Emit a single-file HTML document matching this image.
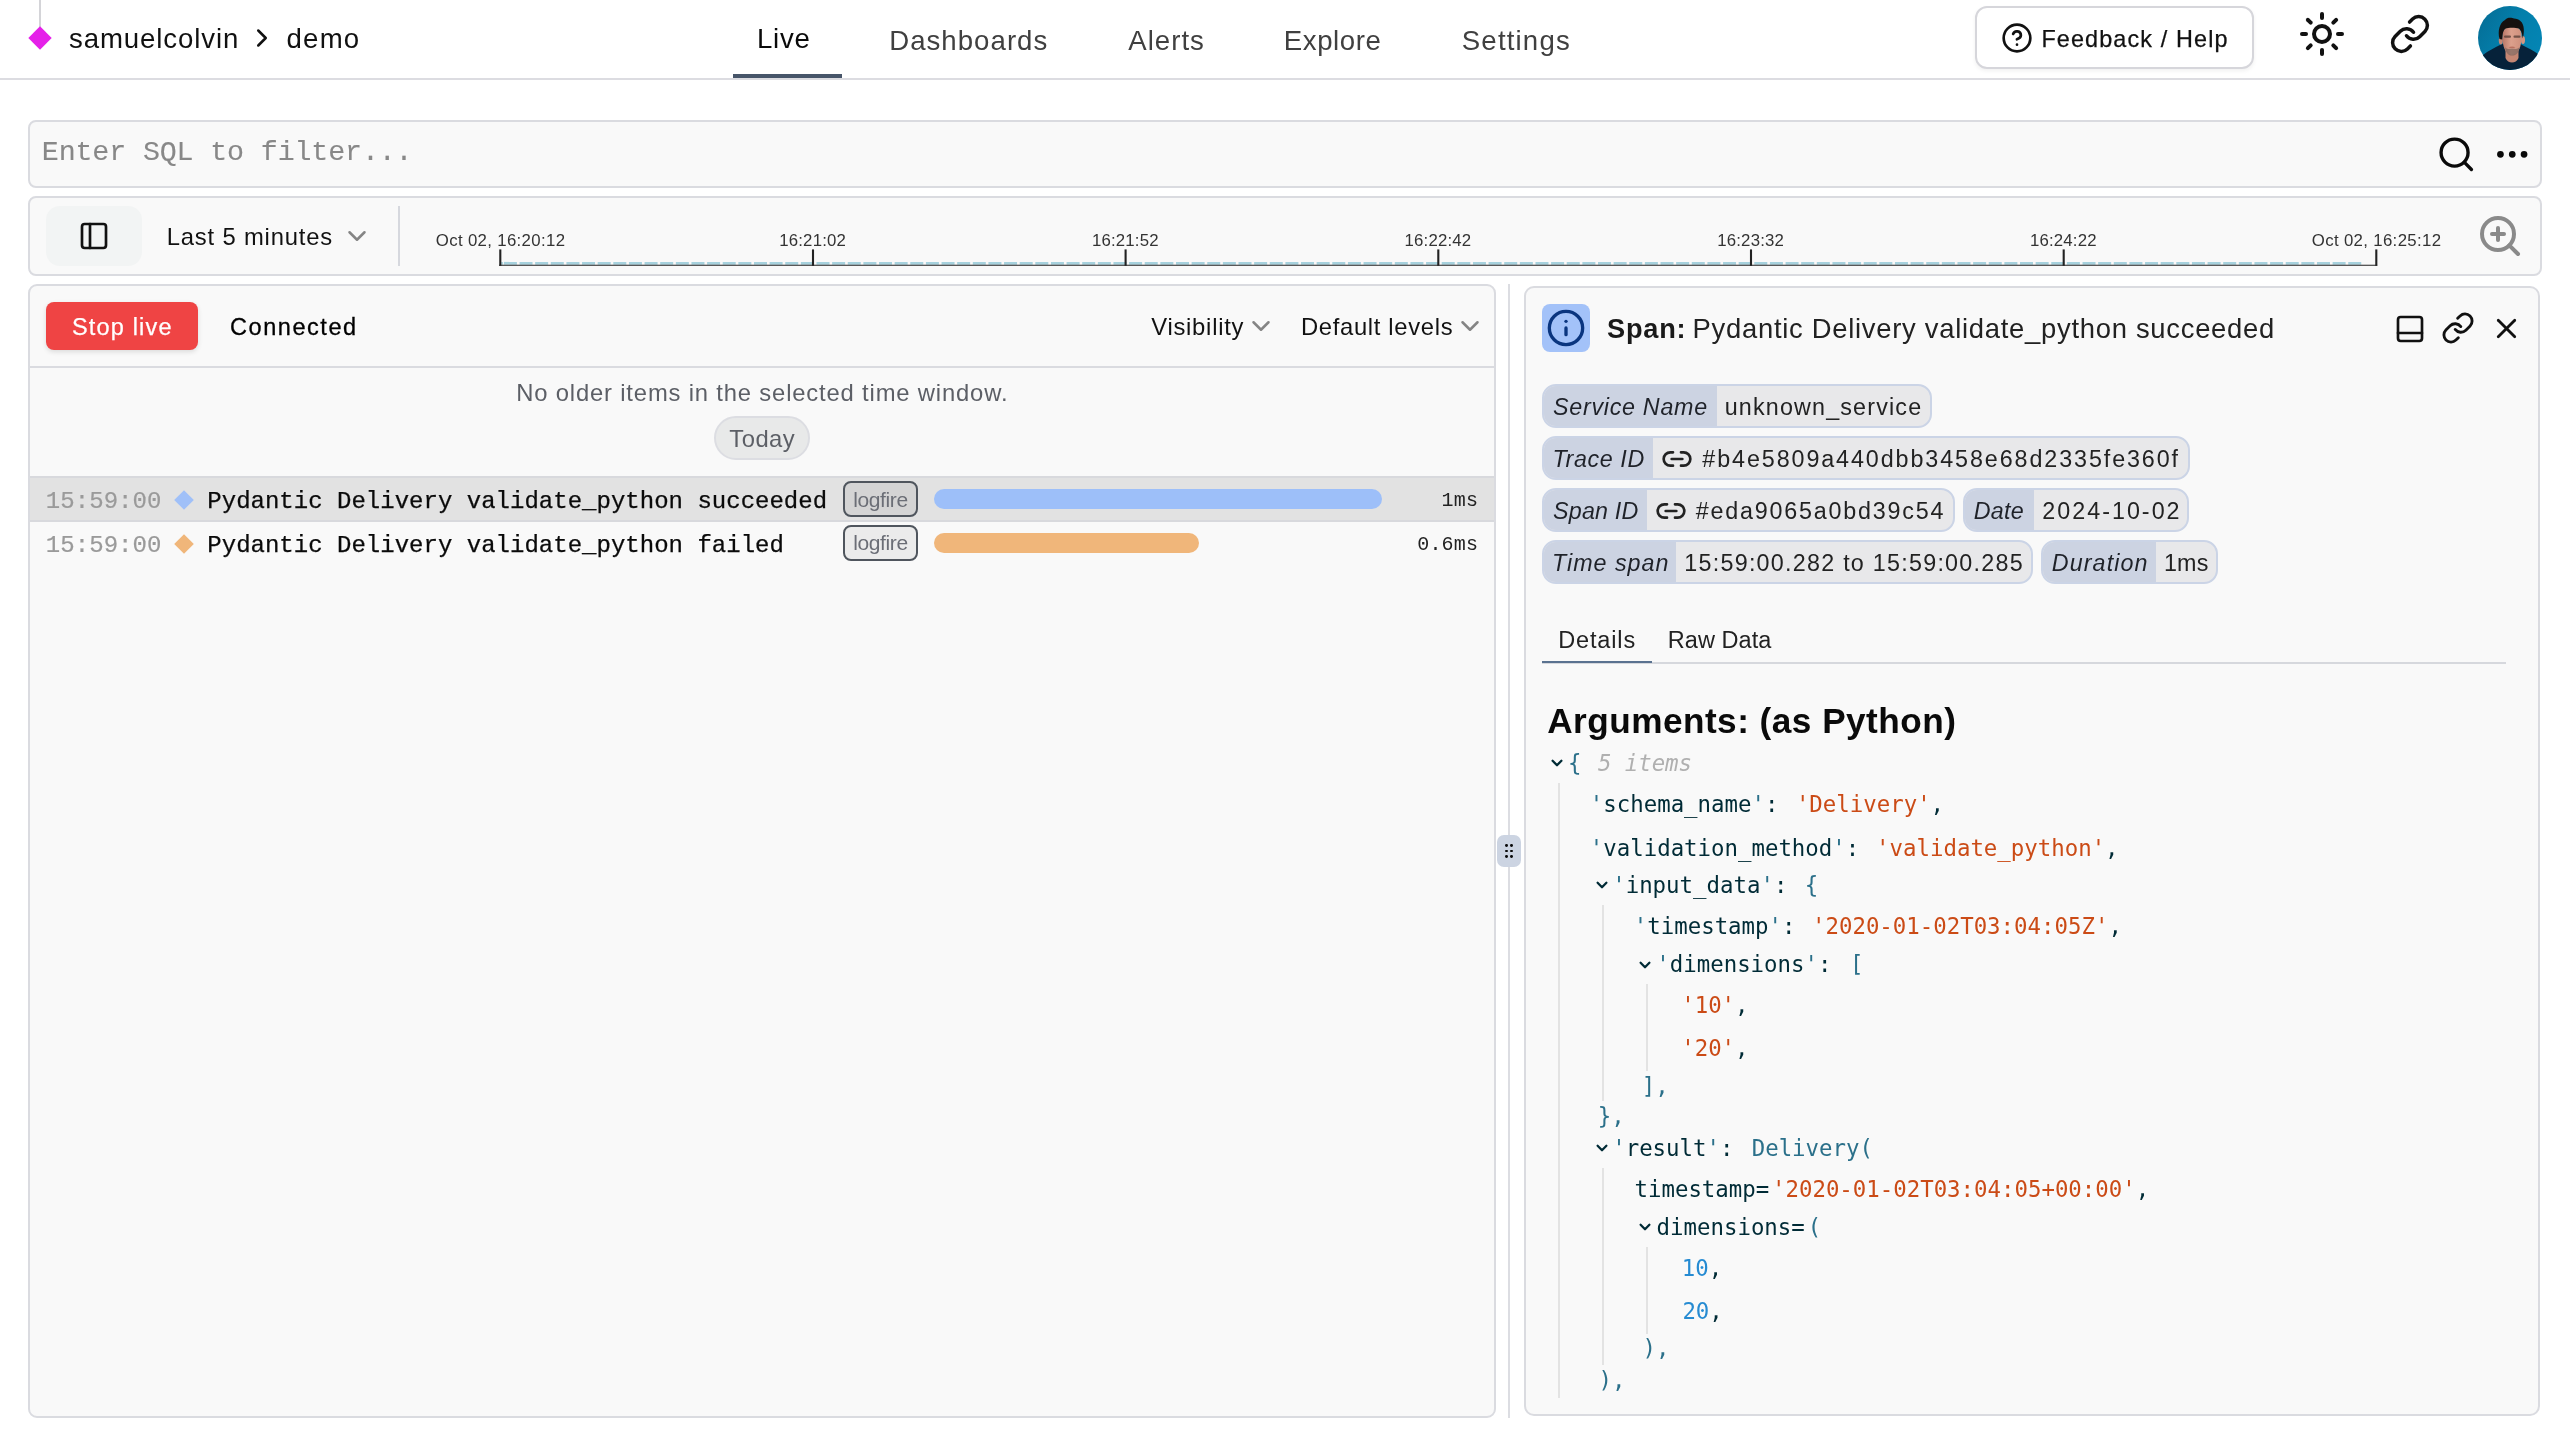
<!DOCTYPE html>
<html lang="en"><head><meta charset="utf-8"><title>Logfire - Live</title>
<style>
html,body{margin:0;padding:0;background:#fff;}
body{width:2570px;height:1444px;position:relative;overflow:hidden;font-family:"Liberation Sans", sans-serif;}
#root{position:absolute;left:0;top:0;width:2570px;height:1444px;will-change:transform;}
.a{position:absolute;box-sizing:border-box;}
.t{white-space:pre;}
.chip{border:2px solid #cbd4e6;border-radius:14px;background:#e8e8ea;overflow:hidden;}
.chip>div{height:100%;background:#ccd3e2;}
</style></head><body><div id="root">
<div class="a" style="left:39px;top:0px;width:2px;height:27px;background:#d4d4d8;"></div>
<svg class="a" style="left:26px;top:24px" width="28" height="28" viewBox="0 0 28 28"><polygon points="14,2.3 25.7,14 14,25.7 2.3,14" fill="#e520e9"/></svg>
<div class="a t" style='left:69.00px;top:25.01px;font:normal 400 27.6px/1 "Liberation Sans", sans-serif;letter-spacing:0.886px;color:#111;'>samuelcolvin</div>
<svg class="a" style="left:247px;top:23px;" width="30" height="30" viewBox="0 0 24 24" fill="none" stroke="#111" stroke-width="2" stroke-linecap="round" stroke-linejoin="round"><path d="m9 18 6-6-6-6"/></svg>
<div class="a t" style='left:286.60px;top:25.01px;font:normal 400 27.6px/1 "Liberation Sans", sans-serif;letter-spacing:1.174px;color:#111;'>demo</div>
<div class="a t" style='left:756.90px;top:25.01px;font:normal 400 27.6px/1 "Liberation Sans", sans-serif;letter-spacing:0.775px;color:#0a0a0a;'>Live</div>
<div class="a t" style='left:889.20px;top:27.01px;font:normal 400 27.6px/1 "Liberation Sans", sans-serif;letter-spacing:1.034px;color:#404040;'>Dashboards</div>
<div class="a t" style='left:1128.20px;top:27.01px;font:normal 400 27.6px/1 "Liberation Sans", sans-serif;letter-spacing:1.033px;color:#404040;'>Alerts</div>
<div class="a t" style='left:1283.80px;top:27.01px;font:normal 400 27.6px/1 "Liberation Sans", sans-serif;letter-spacing:0.581px;color:#404040;'>Explore</div>
<div class="a t" style='left:1461.80px;top:27.01px;font:normal 400 27.6px/1 "Liberation Sans", sans-serif;letter-spacing:1.170px;color:#404040;'>Settings</div>
<div class="a" style="left:733px;top:74px;width:109px;height:4px;background:#475569;"></div>
<div class="a" style="left:0px;top:78px;width:2570px;height:2px;background:#dcdce1;"></div>
<div class="a" style="left:1975px;top:6px;width:279px;height:63px;background:#fff;border:2px solid #d6d6db;border-radius:12px;box-shadow:0 2px 4px rgba(0,0,0,.06);"></div>
<svg class="a" style="left:2000.7px;top:21.5px;" width="32" height="32" viewBox="0 0 24 24" fill="none" stroke="#111" stroke-width="2" stroke-linecap="round" stroke-linejoin="round"><circle cx="12" cy="12" r="10"/><path d="M9.09 9a3 3 0 0 1 5.83 1c0 2-3 3-3 3"/><path d="M12 17h.01"/></svg>
<div class="a t" style='left:2041.40px;top:28.00px;font:normal 400 23.4px/1 "Liberation Sans", sans-serif;letter-spacing:1.127px;-webkit-text-stroke:0.25px #111;color:#111;'>Feedback / Help</div>
<svg class="a" style="left:2298px;top:9.9px;" width="48" height="48" viewBox="0 0 24 24" fill="none" stroke="#111" stroke-width="2" stroke-linecap="round" stroke-linejoin="round"><circle cx="12" cy="12" r="4"/><path d="M12 2v2"/><path d="M12 20v2"/><path d="m4.93 4.93 1.41 1.41"/><path d="m17.66 17.66 1.41 1.41"/><path d="M2 12h2"/><path d="M20 12h2"/><path d="m6.34 17.66-1.41 1.41"/><path d="m19.07 4.93-1.41 1.41"/></svg>
<svg class="a" style="left:2388.8px;top:12.9px;" width="42" height="42" viewBox="0 0 24 24" fill="none" stroke="#111" stroke-width="2" stroke-linecap="round" stroke-linejoin="round"><path d="M10 13a5 5 0 0 0 7.54.54l3-3a5 5 0 0 0-7.07-7.07l-1.72 1.71"/><path d="M14 11a5 5 0 0 0-7.54-.54l-3 3a5 5 0 0 0 7.07 7.07l1.71-1.71"/></svg>
<svg class="a" style="left:2478px;top:6px" width="64" height="64" viewBox="0 0 64 64">
<defs><clipPath id="av"><circle cx="32" cy="32" r="32"/></clipPath>
<linearGradient id="avg" x1="0" y1="0" x2="1" y2="0.6"><stop offset="0" stop-color="#056b93"/><stop offset="0.55" stop-color="#047fab"/><stop offset="1" stop-color="#0485b4"/></linearGradient>
<linearGradient id="skin" x1="0" y1="0" x2="1" y2="0"><stop offset="0" stop-color="#b87767"/><stop offset="0.45" stop-color="#dca08c"/><stop offset="1" stop-color="#cf907d"/></linearGradient></defs>
<g clip-path="url(#av)"><rect width="64" height="64" fill="url(#avg)"/>
<path d="M5 49 C10 45 17 41.5 22 39 L27 36.5 L41 37 L45 39.5 C50 42 56 45 60 48 L62 66 L2 66 Z" fill="#06223a"/>
<path d="M27.5 44 L27.5 52 C30 58 38 58 40.5 52 L40.5 44 Z" fill="#c48673"/>
<ellipse cx="22.8" cy="34.5" rx="2" ry="4" fill="#c58775"/><ellipse cx="45" cy="34" rx="2" ry="4" fill="#d39682"/>
<path d="M24.3 30 C24.3 23 28 20.5 34 20.5 C40 20.5 43.6 23 43.6 30 C43.6 38 41.8 43.5 39 47 C36.5 49.6 31.5 49.6 29 47 C26.2 43.5 24.3 38 24.3 30 Z" fill="url(#skin)"/>
<path d="M27 41 C29 44 31 42.5 34 42.5 C37 42.5 39 44 41.5 41 C41 46 38.5 49.6 34 49.6 C30 49.6 27.5 46 27 41 Z" fill="#6a5a55" opacity=".6"/>
<path d="M30.5 41.2 C32.5 40.2 35.5 40.2 37.5 41.2 C35.5 42.4 32.5 42.4 30.5 41.2Z" fill="#b9705f"/>
<rect x="26" y="29.6" width="7" height="2.2" rx="1" fill="#5a4038" opacity=".8"/><rect x="35.5" y="29.6" width="7" height="2.2" rx="1" fill="#5a4038" opacity=".8"/>
<path d="M21.5 33 C19.5 25 21.5 17 27 14 C29 11 34 11.5 36 12.5 C41 12.5 45.5 16 45.8 23 C46 27 45.5 30 44.6 32.5 C44.4 27 43 24.5 41 22.5 C37 21.5 30 21.5 27.2 22.8 C25 25 24.5 28 24.2 33.5 Z" fill="#15110f"/>
</g></svg>
<div class="a" style="left:28px;top:120px;width:2514px;height:68px;background:#f9f9f9;border:2px solid #dadbe0;border-radius:8px;"></div>
<div class="a t" style='left:41.80px;top:138.30px;font:normal 400 28.3px/1 "Liberation Mono", "DejaVu Sans Mono", monospace;letter-spacing:-0.133px;-webkit-text-stroke:0.12px #888;color:#888;'>Enter SQL to filter...</div>
<svg class="a" style="left:2435.7px;top:133.6px;" width="40.5" height="40.5" viewBox="0 0 24 24" fill="none" stroke="#0a0a0a" stroke-width="2" stroke-linecap="round" stroke-linejoin="round"><circle cx="11" cy="11" r="8"/><path d="m21 21-4.3-4.3"/></svg>
<svg class="a" style="left:2491.5px;top:133.6px;" width="40.5" height="40.5" viewBox="0 0 24 24" fill="none" stroke="#0a0a0a" stroke-width="2" stroke-linecap="round" stroke-linejoin="round"><circle cx="12" cy="12" r="1"/><circle cx="19" cy="12" r="1"/><circle cx="5" cy="12" r="1"/></svg>
<div class="a" style="left:28px;top:196px;width:2514px;height:80px;background:#f9f9f9;border:2px solid #dadbe0;border-radius:8px;"></div>
<div class="a" style="left:46px;top:206px;width:96px;height:60px;background:#f2f4f4;border-radius:14px;"></div>
<svg class="a" style="left:78px;top:220px;" width="32" height="32" viewBox="0 0 24 24" fill="none" stroke="#111" stroke-width="2" stroke-linecap="round" stroke-linejoin="round"><rect width="18" height="18" x="3" y="3" rx="2"/><path d="M9 3v18"/></svg>
<div class="a t" style='left:166.70px;top:225.01px;font:normal 400 23.8px/1 "Liberation Sans", sans-serif;letter-spacing:0.826px;color:#111;'>Last 5 minutes</div>
<svg class="a" style="left:342.2px;top:221.2px;" width="30" height="30" viewBox="0 0 24 24" fill="none" stroke="#858585" stroke-width="2" stroke-linecap="round" stroke-linejoin="round"><path d="m6 9 6 6 6-6"/></svg>
<div class="a" style="left:398px;top:206px;width:2px;height:60px;background:#d6d8de;"></div>
<svg class="a" style="left:0;top:240px" width="2570" height="34"><line x1="501.3" y1="23.3" x2="502.9" y2="23.3" stroke="#a6d1dd" stroke-width="2.8"/><line x1="503.9" y1="23.3" x2="2361.5" y2="23.3" stroke="#a6d1dd" stroke-width="2.8" stroke-dasharray="13 2.63"/><line x1="499.1" y1="25.25" x2="2377.2" y2="25.25" stroke="#222" stroke-width="1.2"/><line x1="500.3" y1="9.4" x2="500.3" y2="25.8" stroke="#222" stroke-width="2.1"/><line x1="813.0" y1="9.4" x2="813.0" y2="25.8" stroke="#222" stroke-width="2.1"/><line x1="1125.6" y1="9.4" x2="1125.6" y2="25.8" stroke="#222" stroke-width="2.1"/><line x1="1438.3" y1="9.4" x2="1438.3" y2="25.8" stroke="#222" stroke-width="2.1"/><line x1="1751.0" y1="9.4" x2="1751.0" y2="25.8" stroke="#222" stroke-width="2.1"/><line x1="2063.7" y1="9.4" x2="2063.7" y2="25.8" stroke="#222" stroke-width="2.1"/><line x1="2376.3" y1="9.4" x2="2376.3" y2="25.8" stroke="#222" stroke-width="2.1"/></svg>
<div class="a t" style='left:435.75px;top:233.01px;font:normal 400 16.8px/1 "Liberation Sans", sans-serif;letter-spacing:0.343px;color:#333;'>Oct 02, 16:20:12</div>
<div class="a t" style='left:779.22px;top:233.01px;font:normal 400 16.8px/1 "Liberation Sans", sans-serif;letter-spacing:0.187px;color:#333;'>16:21:02</div>
<div class="a t" style='left:1091.89px;top:233.01px;font:normal 400 16.8px/1 "Liberation Sans", sans-serif;letter-spacing:0.187px;color:#333;'>16:21:52</div>
<div class="a t" style='left:1404.56px;top:233.01px;font:normal 400 16.8px/1 "Liberation Sans", sans-serif;letter-spacing:0.187px;color:#333;'>16:22:42</div>
<div class="a t" style='left:1717.23px;top:233.01px;font:normal 400 16.8px/1 "Liberation Sans", sans-serif;letter-spacing:0.187px;color:#333;'>16:23:32</div>
<div class="a t" style='left:2029.90px;top:233.01px;font:normal 400 16.8px/1 "Liberation Sans", sans-serif;letter-spacing:0.187px;color:#333;'>16:24:22</div>
<div class="a t" style='left:2311.77px;top:233.01px;font:normal 400 16.8px/1 "Liberation Sans", sans-serif;letter-spacing:0.343px;color:#333;'>Oct 02, 16:25:12</div>
<svg class="a" style="left:2476px;top:212px;" width="48" height="48" viewBox="0 0 24 24" fill="none" stroke="#8a8a8a" stroke-width="2" stroke-linecap="round" stroke-linejoin="round"><circle cx="11" cy="11" r="8"/><path d="M21 21l-4.35-4.35"/><path d="M11 8v6"/><path d="M8 11h6"/></svg>
<div class="a" style="left:28px;top:284px;width:1468px;height:1134px;background:#f9f9f9;border:2px solid #dadbe0;border-radius:9px;"></div>
<div class="a" style="left:46px;top:302px;width:152px;height:48px;background:#ef4444;border-radius:8px;box-shadow:0 2px 5px rgba(0,0,0,.12);"></div>
<div class="a t" style='left:71.90px;top:316.00px;font:normal 400 23.5px/1 "Liberation Sans", sans-serif;letter-spacing:1.180px;-webkit-text-stroke:0.25px #fff;color:#fff;'>Stop live</div>
<div class="a t" style='left:230.00px;top:316.00px;font:normal 400 23.5px/1 "Liberation Sans", sans-serif;letter-spacing:1.550px;-webkit-text-stroke:0.3px #000;color:#000;'>Connected</div>
<div class="a t" style='left:1151.20px;top:315.01px;font:normal 400 23.8px/1 "Liberation Sans", sans-serif;letter-spacing:0.753px;color:#111;'>Visibility</div>
<svg class="a" style="left:1246.3px;top:311.4px;" width="30" height="30" viewBox="0 0 24 24" fill="none" stroke="#858585" stroke-width="2" stroke-linecap="round" stroke-linejoin="round"><path d="m6 9 6 6 6-6"/></svg>
<div class="a t" style='left:1300.90px;top:315.01px;font:normal 400 23.8px/1 "Liberation Sans", sans-serif;letter-spacing:0.681px;color:#111;'>Default levels</div>
<svg class="a" style="left:1455px;top:311.4px;" width="30" height="30" viewBox="0 0 24 24" fill="none" stroke="#858585" stroke-width="2" stroke-linecap="round" stroke-linejoin="round"><path d="m6 9 6 6 6-6"/></svg>
<div class="a" style="left:30px;top:366px;width:1464px;height:2px;background:#dadbe0;"></div>
<div class="a t" style='left:516.20px;top:381.01px;font:normal 400 23.8px/1 "Liberation Sans", sans-serif;letter-spacing:0.833px;color:#5c5f66;'>No older items in the selected time window.</div>
<div class="a" style="left:714px;top:416px;width:96px;height:44px;background:#e8e9e9;border:2px solid #dcdde2;border-radius:22px;"></div>
<div class="a t" style='left:729.30px;top:427.01px;font:normal 400 23.8px/1 "Liberation Sans", sans-serif;letter-spacing:0.474px;color:#5c5f66;'>Today</div>
<div class="a" style="left:30px;top:476px;width:1464px;height:46px;background:#e2e2e2;border-top:2px solid #d8d9dd;border-bottom:2px solid #d8d9dd;box-sizing:border-box;"></div>
<div class="a t" style='left:45.80px;top:489.62px;font:normal 400 24px/1 "Liberation Mono", "DejaVu Sans Mono", monospace;letter-spacing:0.055px;-webkit-text-stroke:0.2px #9a9a9a;color:#9a9a9a;'>15:59:00</div>
<svg class="a" style="left:173.2px;top:488.7px" width="22" height="22" viewBox="0 0 22 22"><polygon points="11,1.2 20.8,11 11,20.8 1.2,11" fill="#a0c0f8"/></svg>
<div class="a t" style='left:207.30px;top:489.62px;font:normal 400 24px/1 "Liberation Mono", "DejaVu Sans Mono", monospace;letter-spacing:0.012px;-webkit-text-stroke:0.25px #0a0a0a;color:#0a0a0a;'>Pydantic Delivery validate_python succeeded</div>
<div class="a" style="left:843px;top:481.2px;width:75px;height:36px;background:#d4d4d4;border:2px solid #4f555d;border-radius:8px;"></div>
<div class="a t" style='left:853.30px;top:488.50px;font:normal 400 21px/1 "Liberation Sans", sans-serif;letter-spacing:-0.403px;color:#6b6e76;'>logfire</div>
<div class="a" style="left:934px;top:489px;width:448px;height:20px;background:#9dbff9;border-radius:10px;"></div>
<div class="a t" style='left:1441.60px;top:490.60px;font:normal 400 20px/1 "Liberation Mono", "DejaVu Sans Mono", monospace;letter-spacing:0.198px;color:#222;'>1ms</div>
<div class="a t" style='left:45.80px;top:533.51px;font:normal 400 24px/1 "Liberation Mono", "DejaVu Sans Mono", monospace;letter-spacing:0.055px;-webkit-text-stroke:0.2px #9a9a9a;color:#9a9a9a;'>15:59:00</div>
<svg class="a" style="left:173.2px;top:532.6px" width="22" height="22" viewBox="0 0 22 22"><polygon points="11,1.2 20.8,11 11,20.8 1.2,11" fill="#f0b67a"/></svg>
<div class="a t" style='left:207.30px;top:533.51px;font:normal 400 24px/1 "Liberation Mono", "DejaVu Sans Mono", monospace;letter-spacing:0.013px;-webkit-text-stroke:0.25px #0a0a0a;color:#0a0a0a;'>Pydantic Delivery validate_python failed</div>
<div class="a" style="left:843px;top:525.1px;width:75px;height:36px;background:#ebebeb;border:2px solid #4f555d;border-radius:8px;"></div>
<div class="a t" style='left:853.30px;top:532.41px;font:normal 400 21px/1 "Liberation Sans", sans-serif;letter-spacing:-0.403px;color:#6b6e76;'>logfire</div>
<div class="a" style="left:934px;top:533px;width:265px;height:20px;background:#f0b67a;border-radius:10px;"></div>
<div class="a t" style='left:1417.20px;top:534.51px;font:normal 400 20px/1 "Liberation Mono", "DejaVu Sans Mono", monospace;letter-spacing:0.198px;color:#222;'>0.6ms</div>
<div class="a" style="left:1508px;top:284px;width:2px;height:1134px;background:#dcdde2;"></div>
<div class="a" style="left:1497px;top:835px;width:24px;height:32px;background:#ccd4e2;border-radius:7px;"></div>
<div class="a" style="left:1504.8999999999999px;top:844.1px;width:2.8px;height:2.8px;background:#0a0a0a;border-radius:1.4px;"></div>
<div class="a" style="left:1504.8999999999999px;top:849.6px;width:2.8px;height:2.8px;background:#0a0a0a;border-radius:1.4px;"></div>
<div class="a" style="left:1504.8999999999999px;top:854.9px;width:2.8px;height:2.8px;background:#0a0a0a;border-radius:1.4px;"></div>
<div class="a" style="left:1510.3px;top:844.1px;width:2.8px;height:2.8px;background:#0a0a0a;border-radius:1.4px;"></div>
<div class="a" style="left:1510.3px;top:849.6px;width:2.8px;height:2.8px;background:#0a0a0a;border-radius:1.4px;"></div>
<div class="a" style="left:1510.3px;top:854.9px;width:2.8px;height:2.8px;background:#0a0a0a;border-radius:1.4px;"></div>
<div class="a" style="left:1524px;top:286px;width:1016px;height:1130px;background:#f9f9f9;border:2px solid #dadbe0;border-radius:10px;"></div>
<div class="a" style="left:1542px;top:304px;width:48px;height:48px;background:#a3c2f9;border-radius:8px;"></div>
<svg class="a" style="left:1546px;top:308px;" width="40" height="40" viewBox="0 0 24 24" fill="none" stroke="#0a357f" stroke-width="2" stroke-linecap="round" stroke-linejoin="round"><circle cx="12" cy="12" r="10"/><path d="M12 16v-4"/><path d="M12 8h.01"/></svg>
<div class="a t" style='left:1607.00px;top:314.60px;font:normal 700 27.2px/1 "Liberation Sans", sans-serif;letter-spacing:0.758px;color:#1a1a1a;'>Span:</div>
<div class="a t" style='left:1692.60px;top:314.60px;font:normal 400 27.4px/1 "Liberation Sans", sans-serif;letter-spacing:0.725px;color:#222;'>Pydantic Delivery validate_python succeeded</div>
<svg class="a" style="left:2394px;top:312.5px;" width="32" height="32" viewBox="0 0 24 24" fill="none" stroke="#111" stroke-width="2" stroke-linecap="round" stroke-linejoin="round"><rect width="18" height="18" x="3" y="3" rx="2"/><path d="M3 15h18"/></svg>
<svg class="a" style="left:2441px;top:311px;" width="34" height="34" viewBox="0 0 24 24" fill="none" stroke="#111" stroke-width="2" stroke-linecap="round" stroke-linejoin="round"><path d="M10 13a5 5 0 0 0 7.54.54l3-3a5 5 0 0 0-7.07-7.07l-1.72 1.71"/><path d="M14 11a5 5 0 0 0-7.54-.54l-3 3a5 5 0 0 0 7.07 7.07l1.71-1.71"/></svg>
<svg class="a" style="left:2489.5px;top:311.5px;" width="33" height="33" viewBox="0 0 24 24" fill="none" stroke="#111" stroke-width="2" stroke-linecap="round" stroke-linejoin="round"><path d="M18 6 6 18"/><path d="m6 6 12 12"/></svg>
<div class="a chip" style="left:1542px;top:384px;width:390px;height:44px"><div style="width:173px"></div></div>
<div class="a t" style='left:1553.00px;top:395.60px;font:italic 400 23.3px/1 "Liberation Sans", sans-serif;letter-spacing:0.714px;color:#1f2229;'>Service Name</div>
<div class="a t" style='left:1724.70px;top:395.60px;font:normal 400 23.3px/1 "Liberation Sans", sans-serif;letter-spacing:1.175px;color:#222;'>unknown_service</div>
<div class="a chip" style="left:1542px;top:436px;width:648px;height:44px"><div style="width:109px"></div></div>
<div class="a t" style='left:1552.50px;top:447.60px;font:italic 400 23.3px/1 "Liberation Sans", sans-serif;letter-spacing:0.591px;color:#1f2229;'>Trace ID</div>
<div class="a t" style='left:1702.30px;top:447.60px;font:normal 400 23.3px/1 "Liberation Sans", sans-serif;letter-spacing:1.912px;color:#222;'>#b4e5809a440dbb3458e68d2335fe360f</div>
<svg class="a" style="left:1661px;top:442.5px;" width="32" height="32" viewBox="0 0 24 24" fill="none" stroke="#222" stroke-width="2" stroke-linecap="round" stroke-linejoin="round"><path d="M9 17H7A5 5 0 0 1 7 7h2"/><path d="M15 7h2a5 5 0 1 1 0 10h-2"/><path d="M8 12h8"/></svg>
<div class="a chip" style="left:1542px;top:488px;width:413px;height:44px"><div style="width:103px"></div></div>
<div class="a t" style='left:1553.00px;top:499.60px;font:italic 400 23.3px/1 "Liberation Sans", sans-serif;letter-spacing:0.191px;color:#1f2229;'>Span ID</div>
<div class="a t" style='left:1695.70px;top:499.60px;font:normal 400 23.3px/1 "Liberation Sans", sans-serif;letter-spacing:1.794px;color:#222;'>#eda9065a0bd39c54</div>
<svg class="a" style="left:1654.5px;top:494.5px;" width="32" height="32" viewBox="0 0 24 24" fill="none" stroke="#222" stroke-width="2" stroke-linecap="round" stroke-linejoin="round"><path d="M9 17H7A5 5 0 0 1 7 7h2"/><path d="M15 7h2a5 5 0 1 1 0 10h-2"/><path d="M8 12h8"/></svg>
<div class="a chip" style="left:1963px;top:488px;width:226px;height:44px"><div style="width:69px"></div></div>
<div class="a t" style='left:1973.80px;top:499.60px;font:italic 400 23.3px/1 "Liberation Sans", sans-serif;letter-spacing:0.249px;color:#1f2229;'>Date</div>
<div class="a t" style='left:2042.30px;top:499.60px;font:normal 400 23.3px/1 "Liberation Sans", sans-serif;letter-spacing:2.010px;color:#222;'>2024-10-02</div>
<div class="a chip" style="left:1542px;top:540px;width:491px;height:44px"><div style="width:131.7px"></div></div>
<div class="a t" style='left:1552.00px;top:551.60px;font:italic 400 23.3px/1 "Liberation Sans", sans-serif;letter-spacing:0.975px;color:#1f2229;'>Time span</div>
<div class="a t" style='left:1684.30px;top:551.60px;font:normal 400 23.3px/1 "Liberation Sans", sans-serif;letter-spacing:1.257px;color:#222;'>15:59:00.282 to 15:59:00.285</div>
<div class="a chip" style="left:2041px;top:540px;width:177px;height:44px"><div style="width:112.7px"></div></div>
<div class="a t" style='left:2051.70px;top:551.60px;font:italic 400 23.3px/1 "Liberation Sans", sans-serif;letter-spacing:1.114px;color:#1f2229;'>Duration</div>
<div class="a t" style='left:2163.90px;top:551.60px;font:normal 400 23.3px/1 "Liberation Sans", sans-serif;letter-spacing:0.268px;color:#222;'>1ms</div>
<div class="a t" style='left:1558.30px;top:628.71px;font:normal 400 23.5px/1 "Liberation Sans", sans-serif;letter-spacing:0.836px;color:#222;'>Details</div>
<div class="a t" style='left:1667.80px;top:628.71px;font:normal 400 23.5px/1 "Liberation Sans", sans-serif;letter-spacing:0.056px;color:#222;'>Raw Data</div>
<div class="a" style="left:1542px;top:662px;width:964px;height:2px;background:#d6d8dd;"></div>
<div class="a" style="left:1542px;top:661px;width:110px;height:2.4px;background:#5a7290;"></div>
<div class="a t" style='left:1547.20px;top:703.30px;font:normal 700 35.2px/1 "Liberation Sans", sans-serif;letter-spacing:0.472px;color:#0a0a0a;'>Arguments: (as Python)</div>
<div class="a" style="left:1558px;top:783px;width:2px;height:615px;background:#e3e3e3;"></div>
<div class="a" style="left:1601.6px;top:905px;width:2px;height:196px;background:#e3e3e3;"></div>
<div class="a" style="left:1601.6px;top:1168px;width:2px;height:196.5px;background:#e3e3e3;"></div>
<div class="a" style="left:1646.2px;top:984px;width:2px;height:86.5px;background:#e3e3e3;"></div>
<div class="a" style="left:1646.2px;top:1247px;width:2px;height:86.7px;background:#e3e3e3;"></div>
<svg class="a" style="left:1549.4px;top:757.4px" width="16" height="12" viewBox="-8 -6 16 12" fill="none" stroke="#002b36" stroke-width="2.3" stroke-linecap="round" stroke-linejoin="round"><path d="M-4.4 -2.2 L0 2.2 L4.4 -2.2"/></svg>
<div class="a t" style='left:1567.90px;top:751.70px;font:normal 400 22.38px/1 "DejaVu Sans Mono", "Liberation Mono", monospace;color:#2b708a;'>{</div>
<div class="a t" style='left:1598.10px;top:751.70px;font:italic 400 22.38px/1 "DejaVu Sans Mono", "Liberation Mono", monospace;letter-spacing:-0.088px;color:#b0b0b0;'>5 items</div>
<div class="a t" style='left:1589.80px;top:792.81px;font:normal 400 22.38px/1 "DejaVu Sans Mono", "Liberation Mono", monospace;'><span style="color:#2b708a">'</span><span style="color:#002b36">schema_name</span><span style="color:#2b708a">'</span><span style="color:#002b36">:</span></div>
<div class="a t" style='left:1795.90px;top:792.81px;font:normal 400 22.38px/1 "DejaVu Sans Mono", "Liberation Mono", monospace;'><span style="color:#cb4b16">'Delivery'</span><span style="color:#002b36">,</span></div>
<div class="a t" style='left:1589.80px;top:836.50px;font:normal 400 22.38px/1 "DejaVu Sans Mono", "Liberation Mono", monospace;'><span style="color:#2b708a">'</span><span style="color:#002b36">validation_method</span><span style="color:#2b708a">'</span><span style="color:#002b36">:</span></div>
<div class="a t" style='left:1876.10px;top:836.50px;font:normal 400 22.38px/1 "DejaVu Sans Mono", "Liberation Mono", monospace;'><span style="color:#cb4b16">'validate_python'</span><span style="color:#002b36">,</span></div>
<svg class="a" style="left:1593.5px;top:879.2px" width="16" height="12" viewBox="-8 -6 16 12" fill="none" stroke="#002b36" stroke-width="2.3" stroke-linecap="round" stroke-linejoin="round"><path d="M-4.4 -2.2 L0 2.2 L4.4 -2.2"/></svg>
<div class="a t" style='left:1612.20px;top:873.61px;font:normal 400 22.38px/1 "DejaVu Sans Mono", "Liberation Mono", monospace;'><span style="color:#2b708a">'</span><span style="color:#002b36">input_data</span><span style="color:#2b708a">'</span><span style="color:#002b36">:</span></div>
<div class="a t" style='left:1804.70px;top:873.61px;font:normal 400 22.38px/1 "DejaVu Sans Mono", "Liberation Mono", monospace;color:#2b708a;'>{</div>
<div class="a t" style='left:1633.80px;top:914.61px;font:normal 400 22.38px/1 "DejaVu Sans Mono", "Liberation Mono", monospace;'><span style="color:#2b708a">'</span><span style="color:#002b36">timestamp</span><span style="color:#2b708a">'</span><span style="color:#002b36">:</span></div>
<div class="a t" style='left:1812.00px;top:914.61px;font:normal 400 22.38px/1 "DejaVu Sans Mono", "Liberation Mono", monospace;'><span style="color:#cb4b16">'2020-01-02T03:04:05Z'</span><span style="color:#002b36">,</span></div>
<svg class="a" style="left:1637.4px;top:958.6px" width="16" height="12" viewBox="-8 -6 16 12" fill="none" stroke="#002b36" stroke-width="2.3" stroke-linecap="round" stroke-linejoin="round"><path d="M-4.4 -2.2 L0 2.2 L4.4 -2.2"/></svg>
<div class="a t" style='left:1656.30px;top:953.00px;font:normal 400 22.38px/1 "DejaVu Sans Mono", "Liberation Mono", monospace;'><span style="color:#2b708a">'</span><span style="color:#002b36">dimensions</span><span style="color:#2b708a">'</span><span style="color:#002b36">:</span></div>
<div class="a t" style='left:1849.90px;top:953.00px;font:normal 400 22.38px/1 "DejaVu Sans Mono", "Liberation Mono", monospace;color:#2b708a;'>[</div>
<div class="a t" style='left:1681.20px;top:993.81px;font:normal 400 22.38px/1 "DejaVu Sans Mono", "Liberation Mono", monospace;'><span style="color:#cb4b16">'10'</span><span style="color:#002b36">,</span></div>
<div class="a t" style='left:1681.20px;top:1037.00px;font:normal 400 22.38px/1 "DejaVu Sans Mono", "Liberation Mono", monospace;'><span style="color:#cb4b16">'20'</span><span style="color:#002b36">,</span></div>
<div class="a t" style='left:1641.70px;top:1074.50px;font:normal 400 22.38px/1 "DejaVu Sans Mono", "Liberation Mono", monospace;color:#2b708a;'>],</div>
<div class="a t" style='left:1597.80px;top:1105.20px;font:normal 400 22.38px/1 "DejaVu Sans Mono", "Liberation Mono", monospace;color:#2b708a;'>},</div>
<svg class="a" style="left:1593.5px;top:1142.4px" width="16" height="12" viewBox="-8 -6 16 12" fill="none" stroke="#002b36" stroke-width="2.3" stroke-linecap="round" stroke-linejoin="round"><path d="M-4.4 -2.2 L0 2.2 L4.4 -2.2"/></svg>
<div class="a t" style='left:1612.20px;top:1136.81px;font:normal 400 22.38px/1 "DejaVu Sans Mono", "Liberation Mono", monospace;'><span style="color:#2b708a">'</span><span style="color:#002b36">result</span><span style="color:#2b708a">'</span><span style="color:#002b36">:</span></div>
<div class="a t" style='left:1751.70px;top:1136.81px;font:normal 400 22.38px/1 "DejaVu Sans Mono", "Liberation Mono", monospace;color:#2b708a;'>Delivery(</div>
<div class="a t" style='left:1634.50px;top:1177.70px;font:normal 400 22.38px/1 "DejaVu Sans Mono", "Liberation Mono", monospace;color:#002b36;'>timestamp=</div>
<div class="a t" style='left:1772.00px;top:1177.70px;font:normal 400 22.38px/1 "DejaVu Sans Mono", "Liberation Mono", monospace;'><span style="color:#cb4b16">'2020-01-02T03:04:05+00:00'</span><span style="color:#002b36">,</span></div>
<svg class="a" style="left:1637.4px;top:1221.4px" width="16" height="12" viewBox="-8 -6 16 12" fill="none" stroke="#002b36" stroke-width="2.3" stroke-linecap="round" stroke-linejoin="round"><path d="M-4.4 -2.2 L0 2.2 L4.4 -2.2"/></svg>
<div class="a t" style='left:1656.60px;top:1215.81px;font:normal 400 22.38px/1 "DejaVu Sans Mono", "Liberation Mono", monospace;color:#002b36;'>dimensions=</div>
<div class="a t" style='left:1807.70px;top:1215.81px;font:normal 400 22.38px/1 "DejaVu Sans Mono", "Liberation Mono", monospace;color:#2b708a;'>(</div>
<div class="a t" style='left:1681.70px;top:1256.61px;font:normal 400 22.38px/1 "DejaVu Sans Mono", "Liberation Mono", monospace;'><span style="color:#268bd2">10</span><span style="color:#002b36">,</span></div>
<div class="a t" style='left:1682.40px;top:1299.81px;font:normal 400 22.38px/1 "DejaVu Sans Mono", "Liberation Mono", monospace;'><span style="color:#268bd2">20</span><span style="color:#002b36">,</span></div>
<div class="a t" style='left:1642.50px;top:1337.40px;font:normal 400 22.38px/1 "DejaVu Sans Mono", "Liberation Mono", monospace;color:#2b708a;'>),</div>
<div class="a t" style='left:1598.50px;top:1368.50px;font:normal 400 22.38px/1 "DejaVu Sans Mono", "Liberation Mono", monospace;color:#2b708a;'>),</div>
</div></body></html>
